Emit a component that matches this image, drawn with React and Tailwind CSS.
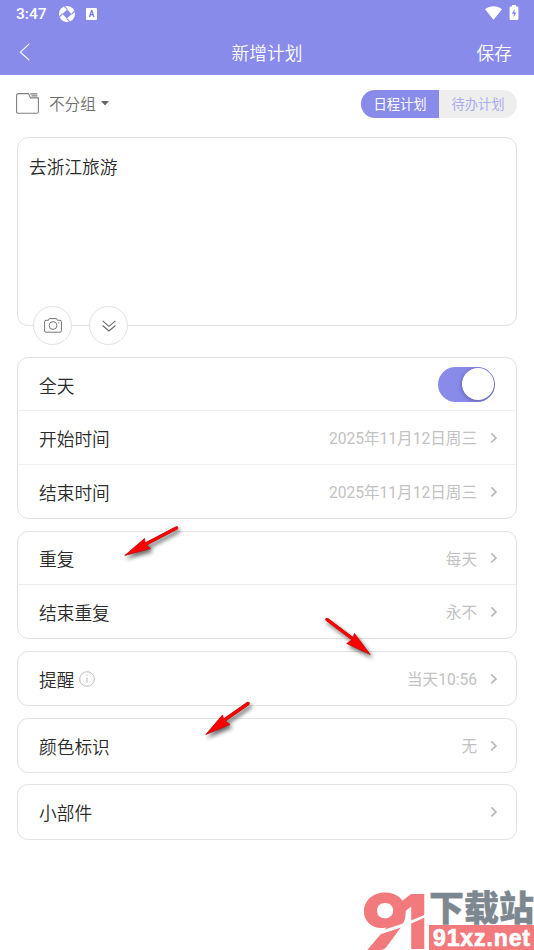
import { useState } from "react";

const SCHEDULE_ROWS = [
  { label: "开始时间", value: "2025年11月12日周三" },
  { label: "结束时间", value: "2025年11月12日周三" },
];

const REPEAT_ROWS = [
  { label: "重复", value: "每天" },
  { label: "结束重复", value: "永不" },
];

function Chevron() {
  return (
    <svg className="ml-[13px] h-3 w-2 shrink-0" viewBox="0 0 8 12" fill="none" stroke="#b8b8b8" strokeWidth="1.6">
      <path d="M1.3 1.4 6 5.9 1.3 10.4" />
    </svg>
  );
}

function Card({ className = "", children }) {
  return (
    <section className={`rounded-[11px] border border-[#e2e2e2] bg-white ${className}`}>
      {children}
    </section>
  );
}

function Row({ label, value, info, className = "" }) {
  return (
    <div className={`flex items-center pr-[18px] pl-[21px] ${className}`}>
      <span className="pt-[4px] text-[17.7px] leading-6 font-[350] text-[#2b2b2b]">{label}</span>
      {info && (
        <svg className="ml-[5px] h-4 w-4" viewBox="0 0 16 16" fill="none" stroke="#b8b8b8">
          <circle cx="8" cy="8" r="7.3" strokeWidth="0.9" />
          <path d="M8 6.6v5.4M8 3.9v1.2" strokeWidth="1" />
        </svg>
      )}
      <span className="ml-auto pt-[3px] text-[15.6px] leading-6 text-[#c2c2c2]">{value}</span>
      <Chevron />
    </div>
  );
}

function StatusBar() {
  return (
    <div className="flex h-7 items-center pr-[15px] pl-[16px] text-white">
      <span className="w-[43px] text-[15.5px] leading-7 font-medium">3:47</span>
      <svg className="h-4 w-4" viewBox="0 0 16 16" fill="currentColor">
        <circle cx="8" cy="8" r="8" />
        <path d="M8.3 3.4 12.6 8.3 7.7 12.6 3.4 7.7Z" fill="#898bea" />
        <path d="M8.3 3.4 5 .2M12.6 8.3 15.8 5M7.7 12.6 11 15.8M3.4 7.7.2 11" stroke="#898bea" strokeWidth="1.1" />
      </svg>
      <svg className="ml-[11px] h-3 w-[11px]" viewBox="0 0 11 12">
        <rect width="11" height="12" rx="1" fill="currentColor" />
        <text x="5.5" y="9" textAnchor="middle" fontSize="8.5" fontWeight="700" fill="#7376d8">A</text>
      </svg>
      <svg className="mb-[3px] ml-auto h-[14px] w-[17px]" viewBox="0 0 17 14">
        <path d="M0 3.2C4.8-.9 12.2-.9 17 3.2L8.5 13.7Z" fill="currentColor" />
      </svg>
      <svg className="mb-[3px] ml-[7px] h-[15px] w-[10px]" viewBox="0 0 10 15">
        <path d="M3 0h4v1.6h1.2q1.2 0 1.2 1.2v11q0 1.2-1.2 1.2H1.8Q.6 15 .6 13.8v-11Q.6 1.6 1.8 1.6H3Z" fill="currentColor" />
        <path d="M5.6 4 2.8 8.8h1.9v3.8l2.7-5H5.6Z" fill="#898bea" />
      </svg>
    </div>
  );
}

function Header() {
  return (
    <header className="h-[75px] bg-[#898bea] text-white">
      <StatusBar />
      <div className="grid h-12 grid-cols-3 items-center pr-[22px] pl-[19px]">
        <svg className="h-[18px] w-3" viewBox="0 0 12 18" fill="none" stroke="currentColor" strokeWidth="1.1">
          <path d="M10.2.8 1.4 9.2l8.8 8" />
        </svg>
        <h1 className="pt-[4px] pl-[3px] text-center text-[17.7px] font-[350]">新增计划</h1>
        <button className="pt-[4px] text-right text-[17.7px] font-[350]">保存</button>
      </div>
    </header>
  );
}

function Arrow({ className, tail, head }) {
  return (
    <svg className={`pointer-events-none absolute overflow-visible drop-shadow-[2px_3px_2px_rgba(0,0,0,0.6)] ${className}`}>
      <path d={tail} stroke="#a01010" strokeWidth="3.4" strokeLinecap="round" />
      <path d={head} fill="#fe0000" stroke="#c00808" strokeWidth="0.8" />
      <path d={tail} stroke="#fe0000" strokeWidth="2.9" strokeLinecap="round" />
    </svg>
  );
}

function Watermark() {
  return (
    <div className="absolute top-[888px] left-[362px] h-[62px] w-[172px]">
      <svg className="h-full w-full" viewBox="0 0 172 62">
        <g fill="#f27a7d" stroke="#f27a7d" fontWeight="900">
          <text transform="translate(0 61) scale(1.04 1)" fontFamily="Lato" fontSize="77" strokeWidth="2">9</text>
          <text transform="translate(35.5 61) scale(.88 1)" fontFamily="Inter" fontSize="75" strokeWidth="0">1</text>
        </g>
        <path d="M9 45.5Q40 37 66 25.5L66 28Q38 41.5 8 49Z" fill="#fff" />
        <text x="67" y="32.5" fontSize="35" fontWeight="900" fill="#7d878f" stroke="#7d878f" strokeWidth=".4">下载站</text>
        <rect x="67" y="37" width="105" height="25" fill="#f27a7d" />
        <text x="71" y="58" fontFamily="Liberation Sans" fontSize="23" fontWeight="700" fill="#fff" stroke="#fff" strokeWidth=".7" textLength="97">91xz.net</text>
      </svg>
    </div>
  );
}

export default function App() {
  const [allDay, setAllDay] = useState(true);
  const [plan, setPlan] = useState("schedule");

  return (
    <div className="relative h-[950px] w-[534px] overflow-hidden bg-white font-['Roboto','Noto_Sans_CJK_SC',sans-serif]">
      <Header />

      <main className="px-[17px]">
        {/* Group picker and plan type */}
        <div className="flex h-[62px] items-center justify-between pb-[5px]">
          <button className="flex items-center text-[15.6px] text-[#707070]">
            <svg className="-ml-px h-[21px] w-[23px]" viewBox="0 0 23 21" fill="none" stroke="#808080" strokeWidth="1.1">
              <path d="M.6 18.5v-16Q.6.6 2.5.6h10l2 4.3h7.9v13.6q0 1.8-1.8 1.8H2.4Q.6 20.3.6 18.5ZM14.2.9h7M15.4 2.9h6" />
            </svg>
            <span className="ml-[10px] pt-[4px] font-[350]">不分组</span>
            <svg className="ml-[5px] h-[5px] w-2" viewBox="0 0 8 5">
              <path d="M0 0h8L4 4.6Z" fill="#666" />
            </svg>
          </button>
          <div className="flex h-7 w-[156px] overflow-hidden rounded-full bg-[#eee] text-[13.3px]">
            <button
              onClick={() => setPlan("schedule")}
              className={`w-1/2 pt-[2px] ${plan === "schedule" ? "bg-[#898bea] text-white" : "text-[#aaabed]"}`}
            >
              日程计划
            </button>
            <button
              onClick={() => setPlan("todo")}
              className={`w-1/2 pt-[2px] ${plan === "todo" ? "bg-[#898bea] text-white" : "text-[#aaabed]"}`}
            >
              待办计划
            </button>
          </div>
        </div>

        {/* Plan text, its tools sit on the bottom border */}
        <Card className="relative h-[189px] px-[11px] pt-[17px]">
          <p className="text-[17.7px] leading-[26px] font-[350] text-[#2b2b2b]">去浙江旅游</p>
          <div className="absolute -bottom-5 left-[15px] flex gap-[17px]">
            <button className="flex h-[39px] w-[39px] items-center justify-center rounded-full border border-[#e2e2e2] bg-white">
              <svg className="h-[15px] w-[18px]" viewBox="0 0 18 15" fill="none" stroke="#666" strokeWidth=".9">
                <path d="M2 2.3h2.4L5.2.6h7.3l.9 1.7H16q1.4 0 1.4 1.4v9.1q0 1.4-1.4 1.4H2Q.6 14.2.6 12.8V3.7Q.6 2.3 2 2.3Z" />
                <circle cx="9" cy="7.5" r="3.9" />
                <path d="M14.1 4.8h1.3" />
              </svg>
            </button>
            <button className="flex h-[39px] w-[39px] items-center justify-center rounded-full border border-[#e2e2e2] bg-white">
              <svg className="h-3 w-[14px]" viewBox="0 0 14 12" fill="none" stroke="#666" strokeWidth="1.1">
                <path d="m.6.8 6.4 5.5L13.4.8M.6 5.5 7 11l6.4-5.5" />
              </svg>
            </button>
          </div>
        </Card>

        <Card className="mt-[31px] h-[162px]">
          <div className="flex h-[53px] items-center justify-between border-b border-[#f1f1f1] pr-[21px] pl-[21px]">
            <span className="pt-[6px] text-[17.7px] leading-6 font-[350] text-[#2b2b2b]">全天</span>
            <button
              onClick={() => setAllDay(!allDay)}
              className={`flex h-[35px] w-[57px] items-center overflow-hidden rounded-full px-px ${
                allDay ? "justify-end bg-[#898bea]" : "justify-start bg-[#ddd]"
              }`}
            >
              <span className="h-8 w-8 rounded-full bg-white shadow-[0_1px_5px_rgba(0,0,0,0.35)]" />
            </button>
          </div>
          <Row {...SCHEDULE_ROWS[0]} className="h-[54px] border-b border-[#f1f1f1]" />
          <Row {...SCHEDULE_ROWS[1]} className="h-[53px]" />
        </Card>

        <Card className="mt-3 h-[108px]">
          <Row {...REPEAT_ROWS[0]} className="h-[53px] border-b border-[#ededed]" />
          <Row {...REPEAT_ROWS[1]} className="h-[53px]" />
        </Card>

        <Card className="mt-3">
          <Row label="提醒" value="当天10:56" info className="h-[53px]" />
        </Card>
        <Card className="mt-3">
          <Row label="颜色标识" value="无" className="h-[53px]" />
        </Card>
        <Card className="mt-[11px]">
          <Row label="小部件" className="h-[54px]" />
        </Card>
      </main>

      {/* Tutorial pointers */}
      <Arrow
        className="top-[526px] left-[124px] h-[32px] w-[56px]"
        tail="M52.5 2 20 19"
        head="M.8 29.5 20.5 12.5 21 17.5 26.5 22.5Z"
      />
      <Arrow
        className="top-[618px] left-[325px] h-[38px] w-[48px]"
        tail="M2 1.5 28 21"
        head="M45.2 36.5 29.5 15.5 27.3 21.5 21.8 25.5Z"
      />
      <Arrow
        className="top-[702px] left-[205px] h-[34px] w-[46px]"
        tail="M43 1.5 18 19"
        head="M.8 32.5 17.5 13 18.8 18 25 22.5Z"
      />

      <Watermark />
    </div>
  );
}
